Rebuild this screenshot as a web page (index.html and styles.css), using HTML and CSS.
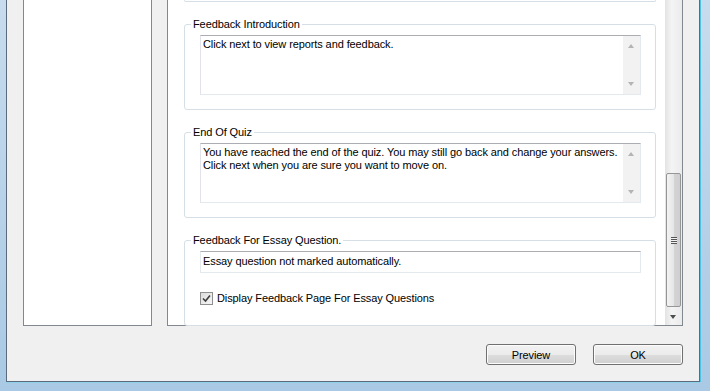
FILE: index.html
```html
<!DOCTYPE html>
<html lang="en">
<head>
  <meta charset="UTF-8">
  <title>Quiz Options</title>
  <link rel="stylesheet" href="styles.css">
</head>
<body>

<div class="window">
  <div class="panels">
    <div class="side-list"></div>

    <div class="main-panel">
      <div class="page">
        <div class="group-tail"></div>

        <fieldset class="group">
          <legend>Feedback Introduction</legend>
          <div class="textbox">
            <div class="textbox-text">Click next to view reports and feedback.</div>
            <div class="mini-scroll">
              <span class="arrow-up"></span>
              <span class="arrow-down"></span>
            </div>
          </div>
        </fieldset>

        <fieldset class="group">
          <legend>End Of Quiz</legend>
          <div class="textbox">
            <div class="textbox-text">You have reached the end of the quiz. You may still go back and change your answers.<br>Click next when you are sure you want to move on.</div>
            <div class="mini-scroll">
              <span class="arrow-up"></span>
              <span class="arrow-down"></span>
            </div>
          </div>
        </fieldset>

        <fieldset class="group">
          <legend>Feedback For Essay Question.</legend>
          <div class="textline">Essay question not marked automatically.</div>
          <label class="check">
            <span class="check-box">
              <svg width="9" height="9" viewBox="0 0 9 9"><path d="M1 4.5 L3.5 7 L8 1.5" fill="none" stroke="#3c3c3c" stroke-width="1.6"/></svg>
            </span>
            Display Feedback Page For Essay Questions
          </label>
        </fieldset>
      </div>

      <div class="vscroll">
        <div class="vscroll-track">
          <div class="vscroll-thumb">
            <span class="grip"></span>
          </div>
        </div>
        <div class="vscroll-btn"><span class="arrow-down dark"></span></div>
      </div>
    </div>
  </div>

  <div class="buttons">
    <button>Preview</button>
    <button>OK</button>
  </div>
</div>

</body>
</html>
```

FILE: styles.css
```css
body {
  margin: 0;
  height: 391px;
  overflow: hidden;
  background: linear-gradient(to bottom, #c7dcee, #a9c9e4);
  font-family: "Liberation Sans", Arial, sans-serif;
  font-size: 11px;
  letter-spacing: -0.1px;
  color: #000;
}
.window {
  margin: 0 10px 0 6px;
  height: 382px;
  box-sizing: border-box;
  background-color: #f0f0f0;
  border: 1px solid #5b6b7c;
  border-top: none;
  box-shadow: 1px 0 0 #4fc3e6, 0 1px 0 #8fd0ea;
  padding: 0 16px 0 16px;
  display: flex;
  flex-direction: column;
}
.panels {
  display: flex;
  gap: 15px;
  height: 326px;
}
.side-list {
  flex: none;
  width: 127px;
  background-color: #fff;
  border: 1px solid #828790;
  border-top: none;
}
.main-panel {
  flex: 1;
  min-width: 0;
  display: flex;
  background-color: #fff;
  border: 1px solid #828790;
  border-top: none;
}
.page {
  flex: 1;
  min-width: 0;
  padding-left: 16px;
  padding-right: 9px;
}
.group-tail {
  height: 1px;
  border: 1px solid #d5dfe5;
  border-top: none;
  border-radius: 0 0 3px 3px;
}
.group {
  margin: 16px 0 0 0;
  padding: 0 14px 0 15px;
  height: 92px;
  box-sizing: border-box;
  border: 1px solid #d5dfe5;
  border-radius: 3px;
  min-width: 0;
}
.group legend {
  padding: 0 2px;
  margin-left: -9px;
  line-height: 13px;
}
.textbox {
  display: flex;
  height: 60px;
  box-sizing: border-box;
  margin-top: 4px;
  border: 1px solid #dbdfe6;
  border-top-color: #abadb3;
  border-left-color: #e2e3ea;
  border-right-color: #e3e9ef;
  border-bottom-color: #e3e9ef;
}
.textbox-text {
  flex: 1;
  min-width: 0;
  padding: 2px 2px;
  line-height: 13px;
  white-space: nowrap;
  overflow: hidden;
}
.mini-scroll {
  flex: none;
  width: 17px;
  background-color: #f2f2f2;
  position: relative;
}
.arrow-up, .arrow-down {
  position: absolute;
  left: 5px;
  width: 0;
  height: 0;
  border-left: 3.5px solid transparent;
  border-right: 3.5px solid transparent;
}
.arrow-up {
  top: 8px;
  border-bottom: 4px solid #b4b4b4;
}
.arrow-down {
  bottom: 8px;
  border-top: 4px solid #b4b4b4;
}
.arrow-down.dark {
  bottom: 6px;
  border-top-color: #4d4d4d;
}
.textline {
  margin-top: 4px;
  height: 22px;
  box-sizing: border-box;
  border: 1px solid #e3e9ef;
  border-top-color: #abadb3;
  padding: 3px 2px;
  line-height: 13px;
}
.check {
  display: flex;
  align-items: center;
  gap: 4px;
  margin-top: 19px;
  line-height: 13px;
}
.check-box {
  width: 11px;
  height: 11px;
  border: 1px solid #8e8f8f;
  background: linear-gradient(135deg, #dcdcdc, #f6f6f6);
  display: flex;
  align-items: center;
  justify-content: center;
}
.vscroll {
  flex: none;
  width: 17px;
  display: flex;
  flex-direction: column;
  background: linear-gradient(to right, #e3e3e3, #f4f4f4 40%, #ebebeb);
}
.vscroll-track {
  flex: 1;
  padding-top: 173px;
}
.vscroll-thumb {
  height: 134px;
  margin: 0 1px;
  box-sizing: border-box;
  border: 1px solid #969696;
  border-radius: 2px;
  background: linear-gradient(to right, #f3f3f3, #e6e6e6 50%, #d4d4d4 51%, #cfcfcf);
  position: relative;
}
.grip {
  position: absolute;
  left: 4px;
  top: 63px;
  width: 6px;
  height: 7px;
  background: repeating-linear-gradient(to bottom, #555 0, #555 1px, #f0f0f0 1px, #f0f0f0 2px);
}
.vscroll-btn {
  height: 17px;
  position: relative;
}
.buttons {
  display: flex;
  justify-content: flex-end;
  gap: 17px;
  margin-top: 18px;
}
button {
  width: 90px;
  height: 21px;
  font-family: inherit;
  font-size: 11px;
  letter-spacing: inherit;
  color: #000;
  border: 1px solid #707070;
  border-radius: 3px;
  background: linear-gradient(to bottom, #f2f2f2, #ebebeb 50%, #dddddd 51%, #cfcfcf);
  box-shadow: inset 0 0 0 1px #fcfcfc;
  padding: 0;
}
```
